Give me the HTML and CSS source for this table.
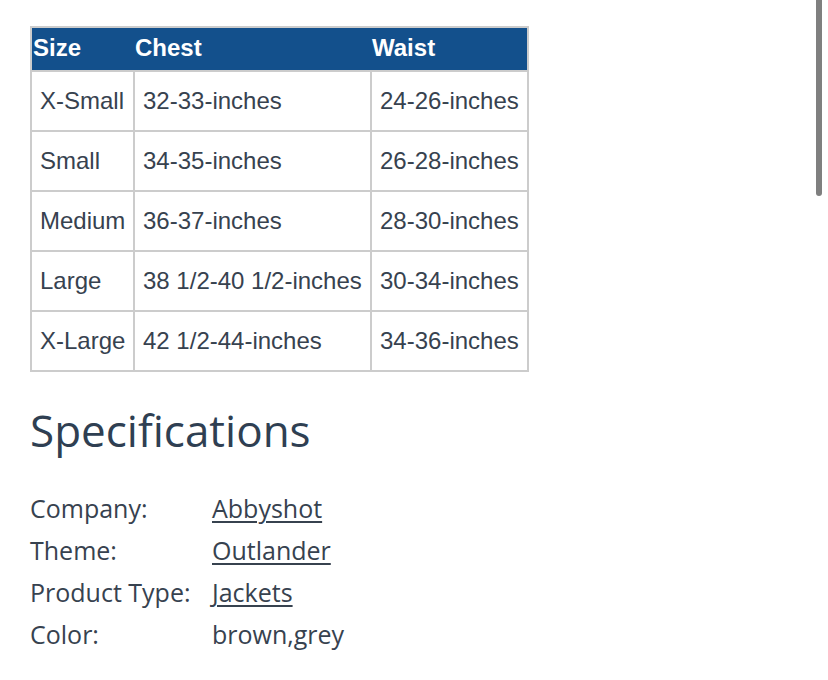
FILE: index.html
```html
<!DOCTYPE html>
<html>
<head>
<meta charset="utf-8">
<link rel="stylesheet" href="styles.css">
</head>
<body>
<div class="page">
  <table class="size-table">
    <colgroup>
      <col class="c1"><col class="c2"><col class="c3">
    </colgroup>
    <thead>
      <tr><th>Size</th><th>Chest</th><th>Waist</th></tr>
    </thead>
    <tbody>
      <tr><td>X-Small</td><td>32-33-inches</td><td>24-26-inches</td></tr>
      <tr><td>Small</td><td>34-35-inches</td><td>26-28-inches</td></tr>
      <tr><td>Medium</td><td>36-37-inches</td><td>28-30-inches</td></tr>
      <tr><td>Large</td><td>38 1/2-40 1/2-inches</td><td>30-34-inches</td></tr>
      <tr><td>X-Large</td><td>42 1/2-44-inches</td><td>34-36-inches</td></tr>
    </tbody>
  </table>

  <h2 class="spec-title">Specifications</h2>

  <dl class="spec-list">
    <dt>Company:</dt><dd><a href="#">Abbyshot</a></dd>
    <dt>Theme:</dt><dd><a href="#">Outlander</a></dd>
    <dt>Product Type:</dt><dd><a href="#">Jackets</a></dd>
    <dt>Color:</dt><dd>brown,grey</dd>
  </dl>
</div>
<div class="scrollbar"></div>
</body>
</html>
```
FILE: styles.css
```css
html, body {
  margin: 0;
  padding: 0;
  background: #ffffff;
}

.page {
  padding: 26px 0 0 30px;
  color: #37424f;
}

.size-table {
  border-collapse: collapse;
  table-layout: fixed;
  width: 497px;
  border: 2px solid #cccccc;
  font-family: "Liberation Sans", Arial, sans-serif;
  font-size: 24px;
  line-height: 28px;
}

.c1 { width: 103px; }
.c2 { width: 237px; }
.c3 { width: 157px; }

.size-table th {
  background: #13508c;
  color: #ffffff;
  font-weight: bold;
  text-align: left;
  padding: 6px 1px 8px 1px;
  border: none;
}

.size-table td {
  border: 2px solid #cccccc;
  padding: 15px 8px;
  white-space: nowrap;
  color: #37424f;
}

.spec-title {
  font-family: "Open Sans", "Noto Sans", sans-serif;
  font-weight: normal;
  font-size: 44px;
  line-height: 60px;
  margin: 28px 0 0 0;
  color: #2f3f52;
}

.spec-list {
  display: grid;
  grid-template-columns: 182px auto;
  margin: 27px 0 0 0;
  font-family: "Open Sans", "Noto Sans", sans-serif;
  font-size: 25px;
  line-height: 42px;
  color: #37424f;
}

.spec-list dt,
.spec-list dd {
  margin: 0;
}

.spec-list a {
  color: #37424f;
  text-decoration: underline;
  text-decoration-thickness: 2px;
  text-underline-offset: 3px;
}

.scrollbar {
  position: fixed;
  top: 0;
  left: 816px;
  width: 6px;
  height: 196px;
  background: #7f7f7f;
  border-radius: 0 0 3px 3px;
}
```
